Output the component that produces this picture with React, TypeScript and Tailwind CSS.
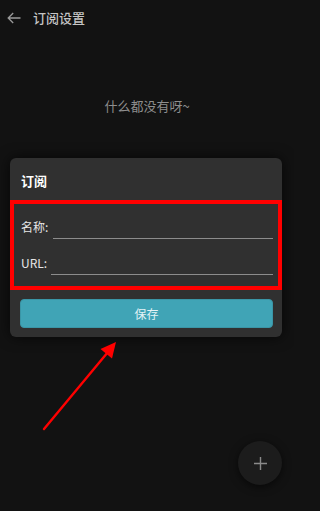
import React from 'react';

/**
 * Subscription settings screen (dark theme) with an open "订阅" dialog.
 */
export default function App() {
  return (
    <div className="w-full h-[511px] bg-[#121212]">
      <div
        className="relative w-[294px] h-[511px] overflow-hidden bg-[#121212]"
        style={{ fontFamily: '"Noto Sans CJK SC", Roboto, "Noto Sans", sans-serif' }}
      >
        {/* Header */}
        <div className="h-9 flex items-center pl-[7px]">
          <svg width="14" height="12" viewBox="0 0 14 12" fill="none" stroke="#9a9a9a" strokeWidth="1.3">
            <path d="M13.5 6H1.2M6.2 1L1.2 6l5 5" />
          </svg>
          <span className="ml-[12px] text-[13px] leading-[18px] font-medium text-[#c4c4c4]">订阅设置</span>
        </div>

        {/* Empty state */}
        <p className="mt-[61px] text-center text-[13px] leading-[18px] text-[#8e8e8e]">什么都没有呀~</p>

        {/* Dialog */}
        <div className="mt-[43px] ml-[10px] mr-[12px] rounded-[6px] bg-[#303030] shadow-[0_0_14px_rgba(0,0,0,0.7)]">
          <div className="h-[42px] pt-[9px] pl-[11px]">
            <span className="text-[13px] leading-[18px] font-bold text-white">订阅</span>
          </div>

          <div className="border-[4px] border-[#ff0000] pb-[10px] pl-[7px] pr-[5px]">
            <div className="flex h-[36px]">
              <span className="w-[32px] mt-[15px] text-[12px] leading-[16px] text-[#e6e6e6]">名称:</span>
              <div className="flex-1 h-[35px] border-b-[1.5px] border-[#8c8c8c]" />
            </div>
            <div className="flex h-[36px]">
              <span className="w-[30px] mt-[15px] text-[12px] leading-[16px] text-[#e6e6e6]">URL:</span>
              <div className="flex-1 h-[35px] border-b-[1.5px] border-[#8c8c8c]" />
            </div>
          </div>

          <div className="pt-[9px] pb-[9px] pl-[10px] pr-[9px]">
            <button className="w-full h-[29px] rounded-[4px] bg-[#40a4b6] border border-[#3a95a6] text-[12px] text-[#e4f3f6]">
              保存
            </button>
          </div>
        </div>

        {/* Annotation arrow */}
        <svg className="absolute left-0 top-0 pointer-events-none" width="294" height="511">
          <line x1="44" y1="429" x2="108" y2="352" stroke="#ff0000" strokeWidth="2.4" strokeLinecap="round" />
          <polygon points="116,342 112,358.5 100.5,349" fill="#ff0000" />
        </svg>

        {/* Floating add button */}
        <button className="absolute left-[238px] top-[441px] w-[44px] h-[44px] rounded-full bg-[#1c1c1c] shadow-[0_2px_8px_rgba(0,0,0,0.6)] flex items-center justify-center">
          <svg width="13" height="13" viewBox="0 0 13 13" stroke="#8a8a8a" strokeWidth="1.4">
            <path d="M6.5 0v13M0 6.5h13" />
          </svg>
        </button>
      </div>
    </div>
  );
}
